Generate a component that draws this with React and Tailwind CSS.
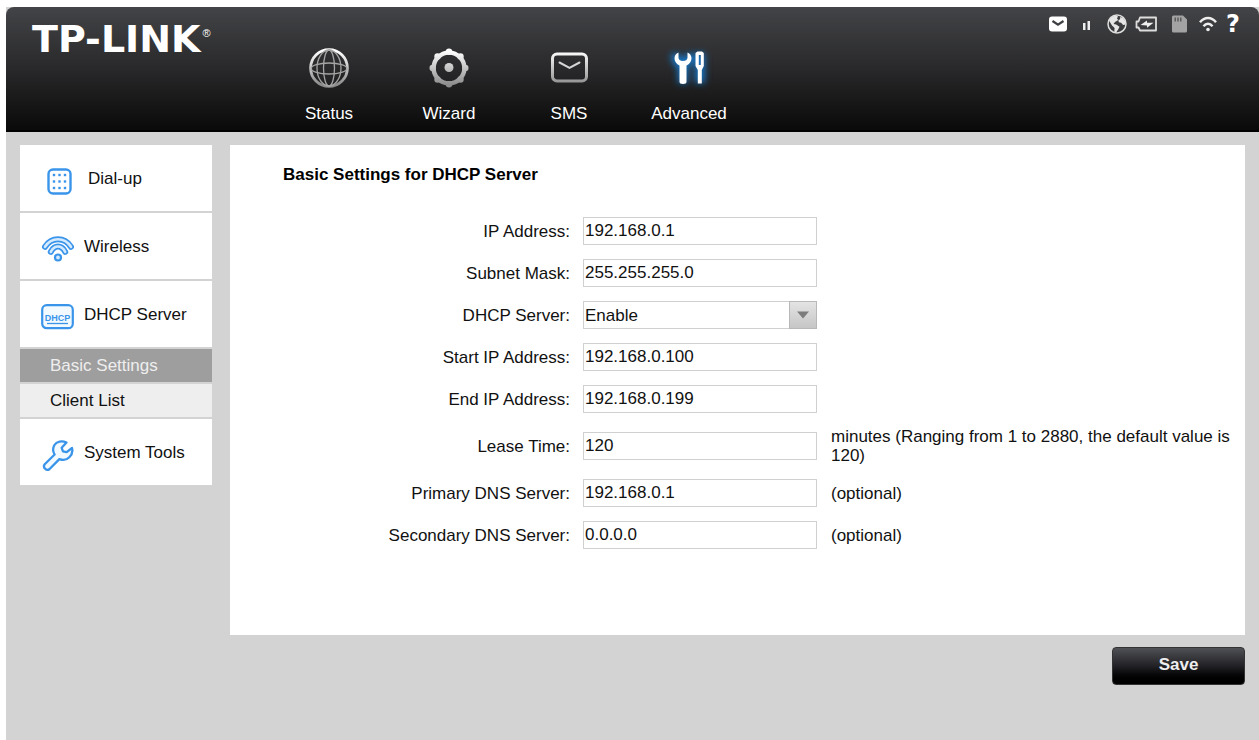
import React from "react";

function GlobeIcon() {
  return (
    <svg width="42" height="42" viewBox="0 0 42 42" fill="none" aria-hidden="true">
      <defs>
        <linearGradient id="silver" x1="0" y1="0" x2="0" y2="42" gradientUnits="userSpaceOnUse">
          <stop offset="0.1" stopColor="#ffffff" />
          <stop offset="0.9" stopColor="#8c8c8c" />
        </linearGradient>
      </defs>
      <circle cx="21" cy="21" r="18.4" stroke="url(#silver)" strokeWidth="2.8" />
      <g stroke="#a5a5a5" strokeWidth="1.3">
        <ellipse cx="21" cy="21" rx="12" ry="18" />
        <ellipse cx="21" cy="21" rx="5.5" ry="18" />
        <ellipse cx="21" cy="21.5" rx="18" ry="5.5" />
      </g>
    </svg>
  );
}

const LOBES = [
  [21, 4.7],
  [32.5, 9.5],
  [37.3, 21],
  [32.5, 32.5],
  [21, 37.3],
  [9.5, 32.5],
  [4.7, 21],
  [9.5, 9.5],
];

function GearIcon() {
  return (
    <svg width="42" height="42" viewBox="0 0 42 42" fill="none" aria-hidden="true">
      <circle cx="21" cy="21" r="15.4" stroke="url(#silver)" strokeWidth="4.4" />
      {LOBES.map(([x, y]) => (
        <circle key={x + "-" + y} cx={x} cy={y} r="3.2" fill="url(#silver)" />
      ))}
      <circle cx="21" cy="20.500" r="4.500" fill="url(#silver)" />
    </svg>
  );
}

function SmsIcon() {
  return (
    <svg width="42" height="42" viewBox="0 0 42 42" fill="none" aria-hidden="true">
      <rect x="4.500" y="7" width="34" height="27" rx="4.500" stroke="url(#silver)" strokeWidth="3" />
      <path d="M11.500 15.500 21.500 20.800 31.500 15.500" stroke="#d5d5d5" strokeWidth="2" strokeLinecap="round" />
    </svg>
  );
}

function ToolsIcon() {
  return (
    <svg width="56" height="56" viewBox="0 0 56 56" fill="none" aria-hidden="true">
      <defs>
        <filter id="glow" x="-50%" y="-50%" width="200%" height="200%">
          <feGaussianBlur stdDeviation="3.500" />
        </filter>
      </defs>
      <g filter="url(#glow)" stroke="#1687e8" strokeWidth="9" opacity="0.9">
        <path d="M22 43V25c-5-2-8-5-7-11M22 25c5-2 7-5 7-11" />
        <path d="M39 13v30" />
      </g>
      <path
        fill="#fff"
        d="M17.500 12.500v5.200c0 2 2 3.300 4.500 3.300s4.500-1.300 4.500-3.300v-5.200c2.500 1 4 3.200 4 5.800 0 3.200-2 5.700-5 7.200v16.300c0 1.500-1.200 2.200-3.500 2.200s-3.500-.7-3.500-2.200V25.500c-3-1.500-5-4-5-7.200 0-2.600 1.500-4.800 4-5.800Z"
      />
      <path fill="#fff" fillRule="evenodd" d="M36.500 11.500h4.500l1.800 1.500v13l-2 4v13.500h-4V30l-2.300-4V13l2-1.500ZM37.800 15v10h2V15h-2Z" />
    </svg>
  );
}

const NAV = [
  { label: "Status", icon: <GlobeIcon /> },
  { label: "Wizard", icon: <GearIcon /> },
  { label: "SMS", icon: <SmsIcon /> },
  { label: "Advanced", icon: <ToolsIcon /> },
];

function StatusIcons() {
  return (
    <div className="flex h-6 items-center text-white">
      <svg width="18" height="16" viewBox="0 0 18 16" className="mr-4" role="img" aria-label="Messages">
        <rect y="0.500" width="18" height="15" rx="3" fill="#fff" />
        <path d="M3.500 5 9 8.700 14.500 5" fill="none" stroke="#3e3f42" strokeWidth="2.200" />
      </svg>
      <svg width="7" height="16" viewBox="0 0 7 16" className="mr-[17px]" role="img" aria-label="Signal">
        <path d="M0 7h2.500v7H0zM4.500 5H7v9H4.500z" fill="#eee" />
      </svg>
      <svg width="20" height="20" viewBox="0 0 20 20" className="mr-2" role="img" aria-label="Internet">
        <circle cx="10" cy="10" r="9" fill="none" stroke="#ddd" strokeWidth="1.500" />
        <path fill="#e6e6e6" d="M2 6.500 4 3.500 8 1.500l3 .8-1 2.200 1.200 1.600L8 8 6.600 10l2.600.5 3.300 2.200-1.200 2.500-2 3-2-.5.3-3.700L5 11.500 2 6.500ZM13 3l2.700.9 2.500 3.100.5 3.500-2.600.5-2-2.200-2.300-.5-.4-2.200 1.800-.9L13 3Z" />
      </svg>
      <svg width="22" height="16" viewBox="0 0 22 16" className="mr-[15px]" role="img" aria-label="Battery charging">
        <path d="M5 1.500h16v13H5l-1.500-3H1.500v-6h2L5 1.500Z" fill="none" stroke="#ddd" strokeWidth="1.800" strokeLinejoin="round" />
        <path d="m5.500 9 6.500-4.500v2.300L18.500 6.800 12 11.800V9.400Z" fill="#eee" />
      </svg>
      <svg width="15" height="18" viewBox="0 0 15 18" className="mr-3" role="img" aria-label="SD card">
        <path d="M1.500 0.500H11l4 4v11.500a1.500 1.500 0 0 1-1.500 1.500h-12A1.500 1.500 0 0 1 0 16V2A1.500 1.500 0 0 1 1.500.5Z" fill="#a3a3a3" />
        <path d="M3.200 2.500v4M6 2.500v4M8.800 2.500v4" stroke="#505050" strokeWidth="1.300" />
      </svg>
      <svg width="18" height="18" viewBox="0 0 18 18" className="mr-2" role="img" aria-label="Wi-Fi">
        <path d="M1 7.300C5.500 1.700 12.500 1.700 17 7.300M4.500 11.200c2.700-3.400 6.300-3.400 9 0" fill="none" stroke="#eee" strokeWidth="2.500" />
        <circle cx="9" cy="14.500" r="1.800" fill="#eee" />
      </svg>
      <a href="#help" aria-label="Help" className="w-4 text-center font-['DejaVu_Sans',sans-serif] text-[24px] leading-6 font-bold">
        ?
      </a>
    </div>
  );
}

function Header() {
  return (
    <header className="flex h-[125px] rounded-t-lg border-b-2 border-black bg-gradient-to-b from-[#434447] via-[#29292b] to-[#0a0a0a] text-white">
      <div className="flex w-[263px] shrink-0 items-start pt-[14px] pl-[26px]">
        <span className="font-['DejaVu_Sans',sans-serif] text-[38px] leading-9 font-bold">TP-LINK</span>
        <span className="pl-[2px] text-[11px] leading-6">®</span>
      </div>
      <nav className="flex">
        {NAV.map((item) => (
          <a key={item.label} href={"#" + item.label.toLowerCase()} className="flex w-[120px] flex-col items-center pt-[33px]">
            <span className="flex h-14 items-center justify-center">{item.icon}</span>
            <span className="mt-2 leading-5">{item.label}</span>
          </a>
        ))}
      </nav>
      <div className="ml-auto pt-[5px] pr-[18px]">
        <StatusIcons />
      </div>
    </header>
  );
}

function DialIcon() {
  return (
    <svg width="37" height="36" viewBox="0 0 37 36" fill="none" aria-hidden="true">
      <rect x="7.500" y="9.500" width="22" height="24" rx="4.500" stroke="#3a95ea" strokeWidth="2.400" />
      <g fill="#3a95ea">
        {[15, 21.5, 28].map((y) => [13, 18.5, 24].map((x) => <rect key={x + "-" + y} x={x - 1.2} y={y - 1.2} width="2.400" height="2.400" />))}
      </g>
    </svg>
  );
}

function WirelessIcon() {
  return (
    <svg width="33" height="36" viewBox="0 0 33 36" fill="none" strokeLinecap="round" aria-hidden="true">
      <path d="M4 18.800C10.500 8.800 23.500 8.800 30 18.800" stroke="#3a95ea" strokeWidth="6" />
      <path d="M4 18.800C10.500 8.800 23.500 8.800 30 18.800" stroke="#d4eaff" strokeWidth="2.600" />
      <path d="M9.800 23.800c3.700-7 10.700-7 14.400 0" stroke="#3a95ea" strokeWidth="6" />
      <path d="M9.800 23.800c3.700-7 10.700-7 14.400 0" stroke="#d4eaff" strokeWidth="2.600" />
      <circle cx="17" cy="29.500" r="5" fill="#fff" />
      <circle cx="17" cy="29.500" r="3" fill="#d4eaff" stroke="#3a95ea" strokeWidth="2.200" />
    </svg>
  );
}

function DhcpIcon() {
  return (
    <svg width="33" height="36" viewBox="0 0 33 36" fill="none" aria-hidden="true">
      <rect x="1.200" y="9.200" width="30.600" height="23" rx="4.500" fill="#f2f9ff" stroke="#3a95ea" strokeWidth="2.200" />
      <text x="16.500" y="24.500" textAnchor="middle" fontFamily="Liberation Sans Narrow, Liberation Sans, sans-serif" fontSize="9" fontWeight="bold" fill="#3a95ea">
        DHCP
      </text>
      <path d="M6 27.500h21" stroke="#3a95ea" strokeWidth="1.300" />
    </svg>
  );
}

function WrenchIcon() {
  return (
    <svg width="33" height="38" viewBox="0 0 33 38" fill="none" aria-hidden="true">
      <path
        d="M25.500 9.500C21 7.300 15.500 8.200 13.300 12.200c-1.600 2.900-1.500 6.400.3 9.300L3.700 31.300c-2.400 3.200 1.900 7.200 4.900 4.700l9.800-9.900c3.300 1.200 7.300.9 9.900-1.800 2.700-2.700 3.700-5.900 2.700-9.300l-5.300 4.200-3.700-.8-1.300-3.600 4.800-5.300Z"
        fill="#f2f9ff"
        stroke="#3a95ea"
        strokeWidth="2.300"
        strokeLinejoin="round"
      />
    </svg>
  );
}

function MenuItem({ icon, label }) {
  return (
    <a href="#menu" className="flex h-[66px] items-center gap-[10px] bg-white pl-[21px]">
      {icon}
      <span>{label}</span>
    </a>
  );
}

function Sidebar() {
  return (
    <nav className="flex w-48 shrink-0 flex-col gap-[2px]">
      <MenuItem icon={<DialIcon />} label="Dial-up" />
      <MenuItem icon={<WirelessIcon />} label="Wireless" />
      <MenuItem icon={<DhcpIcon />} label="DHCP Server" />
      <a href="#basic" className="flex h-[33px] items-center bg-[#9e9e9e] pl-[30px] text-[#eee]">
        Basic Settings
      </a>
      <a href="#clients" className="flex h-[33px] items-center bg-[#eee] pl-[30px]">
        Client List
      </a>
      <MenuItem icon={<WrenchIcon />} label="System Tools" />
    </nav>
  );
}

const FIELDS = [
  { id: "ip", label: "IP Address:", value: "192.168.0.1" },
  { id: "mask", label: "Subnet Mask:", value: "255.255.255.0" },
  { id: "dhcp", label: "DHCP Server:", options: ["Enable", "Disable"] },
  { id: "start", label: "Start IP Address:", value: "192.168.0.100" },
  { id: "end", label: "End IP Address:", value: "192.168.0.199" },
  { id: "lease", label: "Lease Time:", value: "120", hint: "minutes (Ranging from 1 to 2880, the default value is 120)" },
  { id: "dns1", label: "Primary DNS Server:", value: "192.168.0.1", hint: "(optional)" },
  { id: "dns2", label: "Secondary DNS Server:", value: "0.0.0.0", hint: "(optional)" },
];

function Control({ field }) {
  if (field.options) {
    return (
      <div className="relative ml-[13px] w-[234px] shrink-0">
        <select id={field.id} className="block h-7 w-full appearance-none border border-[#d0d0d0] bg-white pr-7 pl-px">
          {field.options.map((o) => (
            <option key={o}>{o}</option>
          ))}
        </select>
        <span className="pointer-events-none absolute top-0 right-0 flex h-7 w-7 items-center justify-center border border-[#b8b8b8] bg-gradient-to-b from-[#e4e4e4] to-[#c6c6c6]">
          <svg width="12" height="8" viewBox="0 0 12 8" aria-hidden="true">
            <path d="M0 0.500h12L6 7.500Z" fill="#7c7c7c" />
          </svg>
        </span>
      </div>
    );
  }
  return (
    <input
      id={field.id}
      type="text"
      defaultValue={field.value}
      className="ml-[13px] h-7 w-[234px] shrink-0 border border-[#d0d0d0] bg-white pl-px"
    />
  );
}

function Field({ field }) {
  return (
    <div className="flex items-center py-[7px]">
      <label htmlFor={field.id} className="w-[340px] shrink-0 text-right">
        {field.label}
      </label>
      <Control field={field} />
      {field.hint && <p className="min-w-0 flex-1 pr-3 pl-[14px]">{field.hint}</p>}
    </div>
  );
}

export default function App() {
  return (
    <div className="min-h-screen bg-white pt-[7px] pl-[6px] font-['Liberation_Sans',Arial,sans-serif] text-[17px] leading-[19px] text-[#111]">
      <div className="min-h-[calc(100vh-7px)] bg-[#d3d3d3]">
        <Header />
        <form onSubmit={(e) => e.preventDefault()} className="pt-[13px] pr-[14px] pb-[54px] pl-[14px]">
          <div className="flex items-start gap-[18px]">
            <Sidebar />
            <main className="min-h-[490px] min-w-0 flex-1 bg-white pt-5">
              <h1 className="mb-[26px] pl-[53px] font-bold text-black">Basic Settings for DHCP Server</h1>
              {FIELDS.map((f) => (
                <Field key={f.id} field={f} />
              ))}
            </main>
          </div>
          <div className="mt-3 flex justify-end">
            <button
              type="submit"
              className="h-[38px] w-[133px] rounded-[4px] border border-[#333] bg-gradient-to-b from-[#505156] via-[#222226] via-50% to-black pb-1 font-bold text-[#eee]"
            >
              Save
            </button>
          </div>
        </form>
      </div>
    </div>
  );
}
